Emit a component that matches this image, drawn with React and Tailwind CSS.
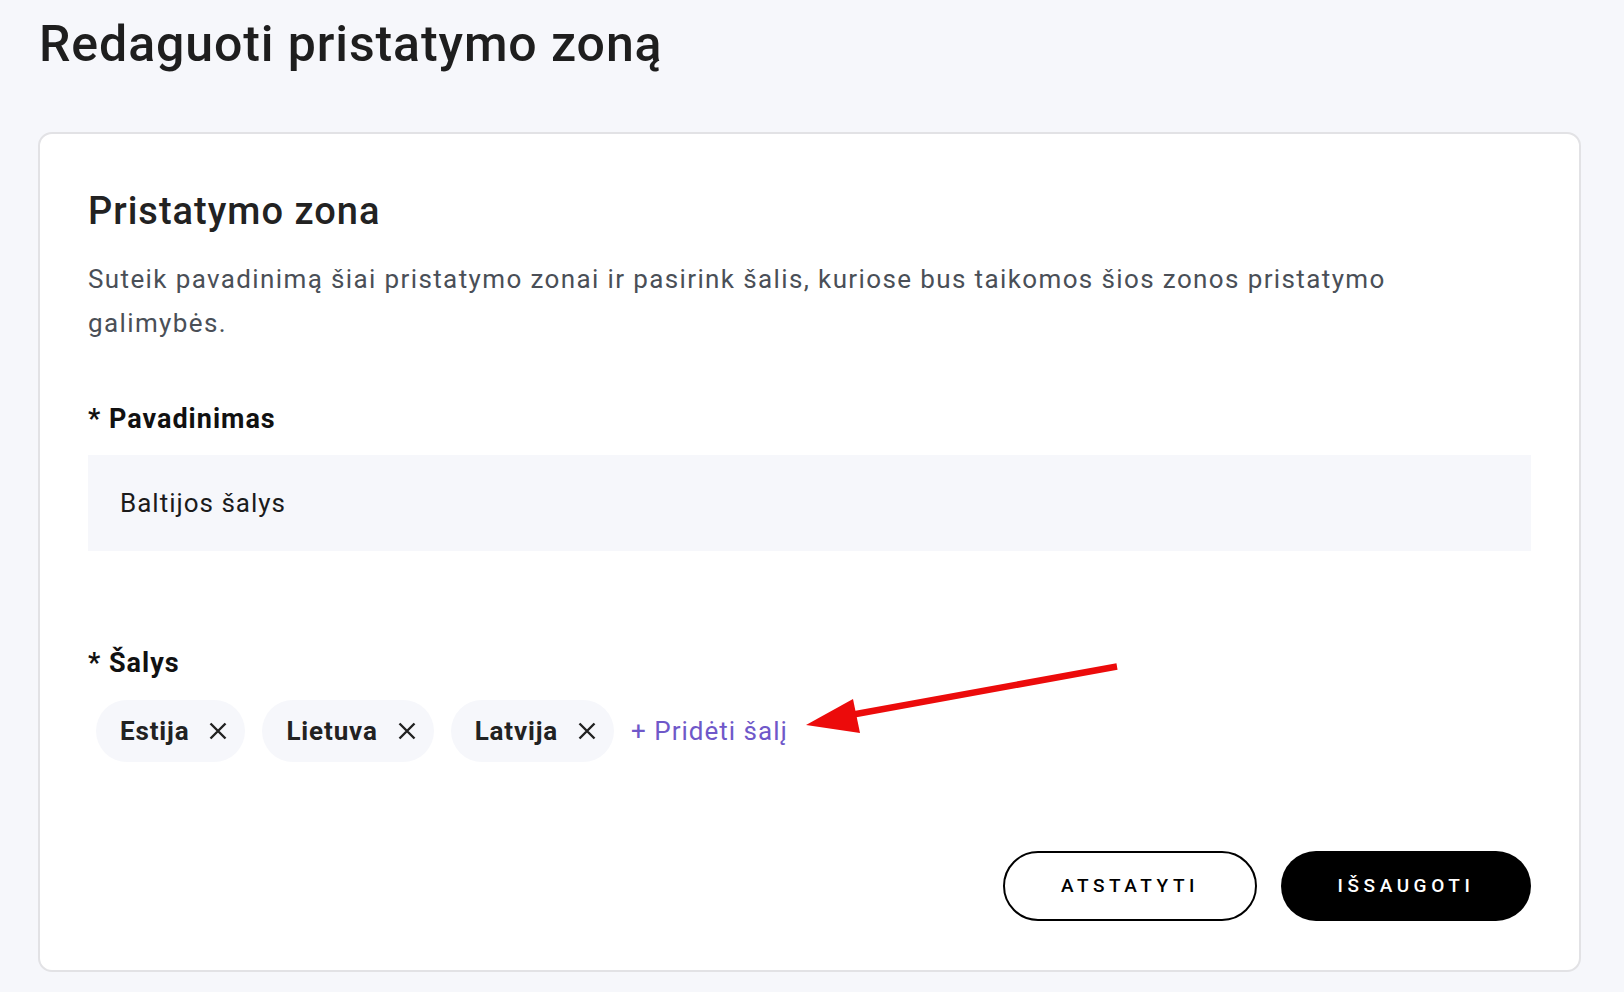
const countries = ["Estija", "Lietuva", "Latvija"];

const CloseIcon = () => (
  <svg width="18" height="18" viewBox="0 0 18 18" className="shrink-0">
    <path d="M1.5 1.5 L16.5 16.5 M16.5 1.5 L1.5 16.5" stroke="#222" strokeWidth="2.4" strokeLinecap="butt" />
  </svg>
);

const App = () => {
  return (
    <div
      className="relative min-h-[992px] bg-[#f6f7fb] pl-[38px] pr-[43px] pt-[14px] pb-[20px]"
      style={{ fontFamily: "Roboto, 'Liberation Sans', sans-serif" }}
    >
      {/* Page title */}
      <h1 className="ml-px text-[50px] leading-[60px] font-medium tracking-[0.9px] text-[#1e1e1e]">
        Redaguoti pristatymo zoną
      </h1>

      {/* Card */}
      <section className="mt-[58px] rounded-[14px] border-2 border-[#e2e2e5] bg-white px-[48px] pt-[54px] pb-[49px]">
        <h2 className="text-[38px] leading-[46px] font-medium tracking-[1px] text-[#222]">Pristatymo zona</h2>
        <p className="mt-[23px] max-w-[1370px] text-[26px] leading-[44px] tracking-[1.38px] text-[#4a4f57]">
          Suteik pavadinimą šiai pristatymo zonai ir pasirink šalis, kuriose bus taikomos šios zonos pristatymo galimybės.
        </p>

        {/* Name */}
        <label className="mt-[56px] block text-[27px] leading-[36px] font-bold tracking-[1px] text-[#111]">
          * Pavadinimas
        </label>
        <div className="mt-[18px] flex h-[96px] items-center bg-[#f6f7fb] px-[32px] text-[26px] tracking-[1px] text-[#1b1b1b]">
          Baltijos šalys
        </div>

        {/* Countries */}
        <label className="mt-[94px] block text-[27px] leading-[36px] font-bold tracking-[1px] text-[#111]">
          * Šalys
        </label>
        <div className="mt-[19px] ml-2 flex items-center gap-[17px]">
          {countries.map((c) => (
            <span
              key={c}
              className="flex h-[62px] items-center gap-[20px] rounded-full bg-[#f6f7fb] pl-6 pr-[18px] text-[26px] font-bold tracking-[0.85px] text-[#222]"
            >
              {c}
              <CloseIcon />
            </span>
          ))}
          <button className="text-[26px] tracking-[1px] text-[#6f58c9]">+ Pridėti šalį</button>
        </div>

        {/* Actions */}
        <div className="mt-[89px] flex justify-end gap-6">
          <button className="h-[70px] w-[254px] rounded-full border-2 border-black bg-white text-[19px] font-medium tracking-[0.24em] text-black">
            ATSTATYTI
          </button>
          <button className="h-[70px] w-[250px] rounded-full bg-black text-[19px] font-medium tracking-[0.24em] text-white">
            IŠSAUGOTI
          </button>
        </div>
      </section>

      {/* Annotation arrow */}
      <svg className="pointer-events-none absolute left-0 top-0" width="1624" height="992" viewBox="0 0 1624 992">
        <line x1="1117" y1="666.5" x2="845" y2="716" stroke="#ec0b0b" strokeWidth="6.5" />
        <polygon points="806,725 853,699 860,733" fill="#ec0b0b" />
      </svg>
    </div>
  );
};

export default App;
